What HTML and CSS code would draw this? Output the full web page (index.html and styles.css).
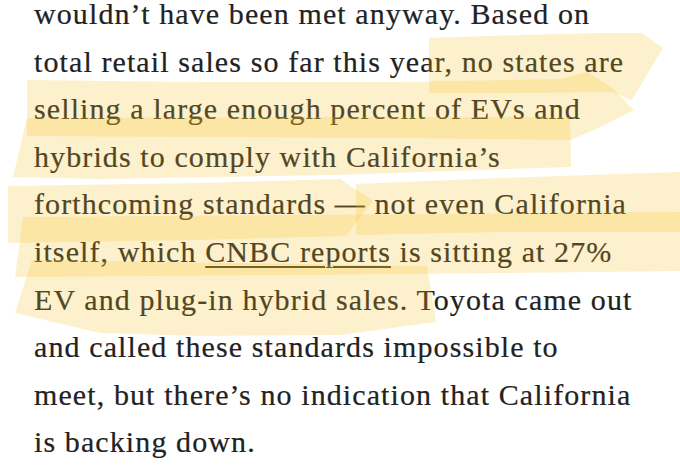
FILE: index.html
```html
<!DOCTYPE html>
<html lang="en">
<head>
<meta charset="utf-8">
<title>Article excerpt</title>
<link rel="stylesheet" href="styles.css">
</head>
<body>
<main class="article">
  <p class="body-text">wouldn’t have been met anyway. Based on<br>total retail sales so far this year, no states are<br>selling a large enough percent of EVs and<br>hybrids to comply with California’s<br>forthcoming standards — not even California<br>itself, which <a class="link" href="#">CNBC reports</a> is sitting at 27%<br>EV and plug-in hybrid sales. Toyota came out<br>and called these standards impossible to<br>meet, but there’s no indication that California<br>is backing down.</p>
  <svg class="marks" width="680" height="474" viewBox="0 0 680 474" aria-hidden="true">
    <g class="stroke">
      <polygon points="429,38 520,35 600,33 642,33 663,48 632,100 612,92 520,93 429,93"/>
      <polygon points="27,80 200,82 400,82 560,79 588,72 612,88 634,110 598,128 571,140 400,138 200,137 27,136"/>
      <polygon points="27,118 300,117 570,117 571,167 333,175 100,179 13,177"/>
      <polygon points="8,186 200,183 340,179 373,201 346,236 200,240 8,243"/>
      <polygon points="356,184 500,178 680,172 680,232 500,232 356,235"/>
      <polygon points="23,217 300,215 680,212 680,271 500,273 300,275 15,277"/>
      <polygon points="32,260 427,266 436,322 340,335 200,336 100,333 15,313"/>
    </g>
  </svg>
</main>
</body>
</html>
```

FILE: styles.css
```css
html, body {
  margin: 0;
  padding: 0;
  background: #ffffff;
}

.article {
  position: relative;
  width: 680px;
  height: 474px;
  overflow: hidden;
}

.body-text {
  margin: -10px 0 0 0;
  padding-left: 34px;
  font-family: "Liberation Serif", "Times New Roman", serif;
  font-size: 30px;
  line-height: 47.6px;
  letter-spacing: 1.1px;
  color: #222222;
  white-space: nowrap;
  -webkit-text-stroke: 0.2px #222222;
}

.link {
  color: inherit;
  text-decoration: underline;
  text-decoration-thickness: 1.5px;
  text-underline-offset: 4px;
}

.marks {
  position: absolute;
  left: 0;
  top: 0;
  pointer-events: none;
}

.stroke polygon {
  fill: rgb(248, 196, 40);
  fill-opacity: 0.23;
}
```
